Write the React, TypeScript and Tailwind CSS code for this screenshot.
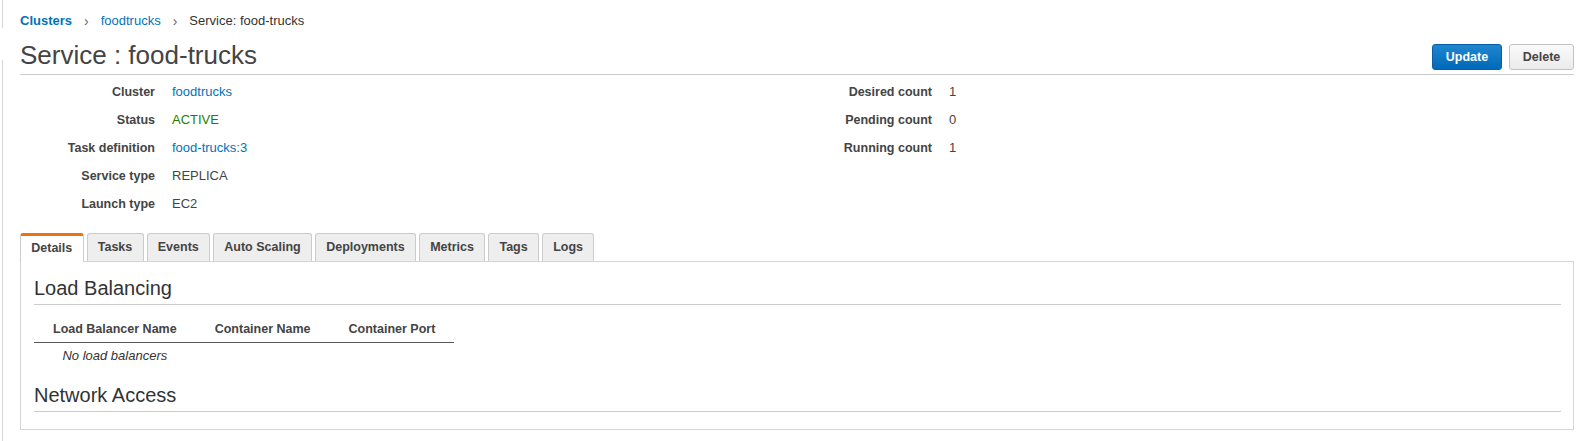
import React from 'react';

const font = { fontFamily: '"Liberation Sans", Arial, Helvetica, sans-serif' };

const leftRows = [
  { label: 'Cluster', value: 'foodtrucks', kind: 'link' },
  { label: 'Status', value: 'ACTIVE', kind: 'ok' },
  { label: 'Task definition', value: 'food-trucks:3', kind: 'link' },
  { label: 'Service type', value: 'REPLICA', kind: 'text' },
  { label: 'Launch type', value: 'EC2', kind: 'text' },
];

const rightRows = [
  { label: 'Desired count', value: '1', kind: 'text' },
  { label: 'Pending count', value: '0', kind: 'text' },
  { label: 'Running count', value: '1', kind: 'text' },
];

const tabs = ['Details', 'Tasks', 'Events', 'Auto Scaling', 'Deployments', 'Metrics', 'Tags', 'Logs'];

function InfoRow({ label, value, kind }: { label: string; value: string; kind: string }) {
  const valueClass =
    kind === 'link' ? 'text-[#0073bb]' : kind === 'ok' ? 'text-[#1d8102]' : 'text-[#444]';
  return (
    <div className="flex h-[28px] items-center">
      <div className="w-[135px] shrink-0 text-right text-[12.5px] font-bold text-[#444]">{label}</div>
      <div className={`ml-[17px] text-[13px] ${valueClass}`}>{value}</div>
    </div>
  );
}

export default function App() {
  const active = 'Details';

  return (
    <div className="flex min-h-[441px] bg-white" style={font}>
      {/* thin rail on the page edge */}
      <div className="flex w-[3px] shrink-0 flex-col">
        <div className="h-[28px] border-r border-[#d5d5d5]" />
        <div className="h-[32px]" />
        <div className="flex-1 border-r border-[#d5d5d5]" />
      </div>

      <div className="flex-1 pl-[17px] pr-[21px] text-[#444]">
        {/* breadcrumb */}
        <div className="mt-[13px] flex h-[16px] items-center text-[13px] leading-[16px]">
          <span className="font-bold text-[#0073bb]">Clusters</span>
          <span className="mx-[12px] text-[14px] text-[#666]">›</span>
          <span className="text-[#0073bb]">foodtrucks</span>
          <span className="mx-[12px] text-[14px] text-[#666]">›</span>
          <span className="text-[#333]">Service: food-trucks</span>
        </div>

        {/* title + actions */}
        <div className="mt-[10px] flex items-start justify-between border-b border-[#cccccc] pb-[3px]">
          <h1 className="h-[32px] text-[26px] leading-[32px] text-[#444]">Service : food-trucks</h1>
          <div className="mt-[5px] flex gap-[7px]">
            <button className="h-[26px] w-[70px] rounded-[3px] border border-[#0a5ea8] bg-gradient-to-b from-[#1e86d0] to-[#0069b8] text-[12.5px] font-bold text-white">
              Update
            </button>
            <button className="h-[26px] w-[65px] rounded-[3px] border border-[#c2c2c2] bg-gradient-to-b from-[#fafafa] to-[#ebebeb] text-[12.5px] font-bold text-[#444]">
              Delete
            </button>
          </div>
        </div>

        {/* summary */}
        <div className="mt-[3px] grid grid-cols-2">
          <div>
            {leftRows.map((r) => (
              <InfoRow key={r.label} {...r} />
            ))}
          </div>
          <div>
            {rightRows.map((r) => (
              <InfoRow key={r.label} {...r} />
            ))}
          </div>
        </div>

        {/* tabs */}
        <div className="mt-[15px] flex items-end">
          {tabs.map((t) =>
            t === active ? (
              <div
                key={t}
                className="relative z-10 -mb-px mr-[3px] flex h-[29px] items-center rounded-t-[3px] border-x border-t-[3px] border-x-[#cccccc] border-t-[#ec7211] bg-white px-[10.25px] pb-[2px] text-[12.5px] font-bold text-[#444]"
              >
                {t}
              </div>
            ) : (
              <div
                key={t}
                className="mr-[3px] flex h-[28px] items-center rounded-t-[3px] border-x border-t border-[#cccccc] bg-[#eeeeee] px-[10.25px] text-[12.5px] font-bold text-[#444]"
              >
                {t}
              </div>
            )
          )}
        </div>

        {/* panel */}
        <div className="border border-[#d5d5d5] pb-[17px] pl-[13px] pr-[12px] pt-[14px]">
          <h2 className="border-b border-[#cccccc] pb-[4px] text-[20px] leading-[24px] text-[#333]">
            Load Balancing
          </h2>

          <table className="mt-[15px] border-collapse text-[12.5px]">
            <thead>
              <tr className="border-b border-[#555]">
                <th className="px-[19px] pb-[4px] text-center font-bold leading-[18px] text-[#444]">Load Balancer Name</th>
                <th className="px-[19px] pb-[4px] text-center font-bold leading-[18px] text-[#444]">Container Name</th>
                <th className="px-[19px] pb-[4px] text-center font-bold leading-[18px] text-[#444]">Container Port</th>
              </tr>
            </thead>
            <tbody>
              <tr>
                <td className="h-[26px] px-[19px] text-center text-[13px] italic text-[#333]">No load balancers</td>
                <td />
                <td />
              </tr>
            </tbody>
          </table>

          <h2 className="mt-[14px] border-b border-[#cccccc] pb-[4px] text-[20px] leading-[24px] text-[#333]">
            Network Access
          </h2>
        </div>
      </div>
    </div>
  );
}
